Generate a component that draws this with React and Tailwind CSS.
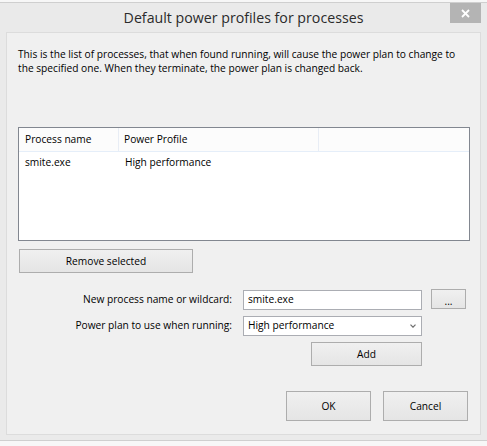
export default function App() {
  const btn = "border border-[#adadad] bg-gradient-to-b from-[#f0f0f0] to-[#e5e5e5] pt-[1px]";
  return (
    <div className="w-[487px] h-[446px] bg-[#f7f7f7] font-['Open_Sans',sans-serif] text-[10.2px] text-black overflow-hidden">
      <div className="mt-[2px] h-[439px] bg-[#eaeaea] border-t border-b border-[#cfcfcf] px-[6px] flex flex-col">
        {/* Title bar */}
        <div className="relative h-[29px] flex items-center justify-center">
          <span className="text-[14.2px] text-[#2b2b2b] pt-[1px]">Default power profiles for processes</span>
          <button className="absolute right-[0px] top-[0px] w-[31px] h-[20px] bg-[#b4b4b4] flex items-center justify-center">
            <svg className="w-[9px] h-[9px]" viewBox="0 0 9 9" fill="none" stroke="white" strokeWidth="1.8">
              <line x1="1" y1="1" x2="8" y2="8" />
              <line x1="8" y1="1" x2="1" y2="8" />
            </svg>
          </button>
        </div>

        {/* Client area */}
        <div className="h-[403px] border border-[#dcdcdc] bg-[#f0f0f0] flex flex-col">
          <p className="pt-[14px] pl-[11px] pr-[8px] leading-[14px]">
            This is the list of processes, that when found running, will cause the power plan to change to the specified one. When they terminate, the power plan is changed back.
          </p>

          {/* Process list */}
          <div className="mt-[52px] ml-[11px] w-[452px] h-[114px] border border-[#828790] bg-white">
            <div className="flex h-[24px] bg-[#fcfcfc] border-b border-[#e5eef9]">
              <div className="w-[100px] border-r border-[#e8edf5] pl-[6px] pt-[1px] flex items-center">Process name</div>
              <div className="w-[200px] border-r border-[#e8edf5] pl-[5px] pt-[1px] flex items-center">Power Profile</div>
              <div className="flex-1" />
            </div>
            <div className="flex h-[19px] items-center pt-[2px]">
              <div className="w-[100px] pl-[6px]">smite.exe</div>
              <div className="pl-[6px]">High performance</div>
            </div>
          </div>

          <button className={`mt-[8px] ml-[12px] w-[174px] h-[24px] ${btn}`}>
            Remove selected
          </button>

          {/* Form */}
          <div className="mt-[16px] flex items-center h-[21px]">
            <label className="w-[225px] text-right pt-[1px]">New process name or wildcard:</label>
            <div className="ml-[11px] w-[179px] h-[20px] border border-[#abadb3] bg-white flex items-center pl-[4px] pt-[1px]">smite.exe</div>
            <button className="ml-[9px] w-[35px] h-[20px] -mt-[1px] border border-[#adadad] bg-gradient-to-b from-[#f0f0f0] to-[#e5e5e5] leading-none pt-[5px]">
              ...
            </button>
          </div>
          <div className="mt-[5px] flex items-center h-[21px]">
            <label className="w-[225px] text-right pt-[1px]">Power plan to use when running:</label>
            <div className="ml-[11px] w-[179px] h-[20px] border border-[#abadb3] bg-white flex items-center pl-[4px] pr-[5px] justify-between">
              <span className="pt-[1px]">High performance</span>
              <svg className="w-[6px] h-[4px]" viewBox="0 0 6 4" fill="none" stroke="#707070" strokeWidth="1.2">
                <polyline points="0.5,0.6 3,3.2 5.5,0.6" />
              </svg>
            </div>
          </div>
          <button className={`mt-[6px] ml-[304px] w-[111px] h-[24px] ${btn}`}>
            Add
          </button>

          <div className="mt-[25px] flex pl-[279px] gap-[12px]">
            <button className={`w-[85px] h-[30px] ${btn}`}>OK</button>
            <button className={`w-[85px] h-[30px] ${btn}`}>Cancel</button>
          </div>
        </div>
      </div>
    </div>
  );
}
